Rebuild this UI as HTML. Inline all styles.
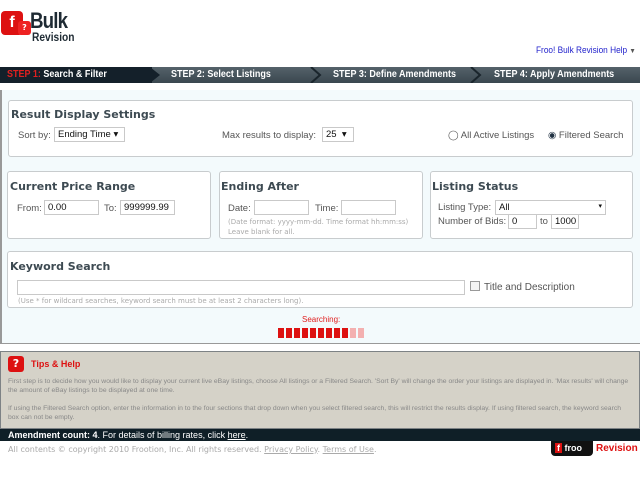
<!DOCTYPE html>
<html><head><meta charset="utf-8"><style>
*{margin:0;padding:0;box-sizing:border-box}
body{width:640px;height:480px;background:#fff;font-family:"DejaVu Sans","Liberation Sans",sans-serif;font-size:9px;color:#555;position:relative;overflow:hidden}
.a{position:absolute}
.box{position:absolute;background:#fff;border:1px solid #c8ccce;border-radius:3px}
.h{position:absolute;font-weight:bold;font-size:11px;color:#3d4a52}
.in{position:absolute;border:1px solid #c9c9c9;background:#fff;height:15px;font-size:9.5px;color:#111;padding:1px 3px;font-family:"Liberation Sans",sans-serif}
.lb{position:absolute;font-size:9.5px;color:#555;font-family:"Liberation Sans",sans-serif;white-space:nowrap}
.step{position:absolute;top:67px;height:16px;color:#fff;font-weight:bold;font-size:10px;font-family:"Liberation Sans",sans-serif;line-height:16px;transform:scaleX(.9);transform-origin:left;white-space:nowrap}
.sm{font-size:7px;color:#aaa}
</style></head><body>
<div class="a" style="left:1px;top:11px;width:22px;height:24px;background:#d11;border-radius:4px;color:#fff;font-weight:bold;font-size:16px;font-family:'Liberation Sans';text-align:center;line-height:24px">f</div>
<div class="a" style="left:18px;top:21px;width:13px;height:14px;background:#e22;border-radius:3px;color:#fff;font-weight:bold;font-size:8px;text-align:center;line-height:14px">?</div>
<div class="a" style="left:30px;top:8px;font-family:'Liberation Sans';font-weight:bold;font-size:22px;color:#1e2a33;letter-spacing:-1px;transform:scaleX(.85);transform-origin:left">Bulk</div>
<div class="a" style="left:32px;top:30px;font-family:'Liberation Sans';font-weight:bold;font-size:12px;color:#1e2a33;transform:scaleX(.85);transform-origin:left">Revision</div>
<div class="a" style="left:536px;top:45px;font-family:'Liberation Sans';font-size:9px;color:#2222cc;white-space:nowrap;transform:scaleX(.92);transform-origin:left">Froo! Bulk Revision Help <span style="color:#555;font-size:7px">▼</span></div>
<div class="a" style="left:0;top:67px;width:640px;height:16px;background:linear-gradient(#55626a,#3a474f)"></div>
<div class="a" style="left:0;top:67px;width:152px;height:16px;background:#14202a"></div>
<svg class="a" style="left:150px;top:67px" width="12" height="16"><polygon points="0,0 10,8 0,16" fill="#14202a"/></svg>
<svg class="a" style="left:310px;top:67px" width="12" height="16"><polyline points="1,0 10,8 1,16" fill="none" stroke="#1a252c" stroke-width="2"/></svg>
<svg class="a" style="left:470px;top:67px" width="12" height="16"><polyline points="1,0 10,8 1,16" fill="none" stroke="#1a252c" stroke-width="2"/></svg>
<div class="step" style="left:7px"><span style="color:#e02020">STEP 1:</span> Search &amp; Filter</div>
<div class="step" style="left:171px">STEP 2: Select Listings</div>
<div class="step" style="left:333px">STEP 3: Define Amendments</div>
<div class="step" style="left:494px">STEP 4: Apply Amendments</div>
<div class="a" style="left:0;top:90px;width:640px;height:254px;background:#f3fafc;border-left:2px solid #999;border-bottom:1px solid #999"></div>
<div class="box" style="left:8px;top:100px;width:625px;height:57px"></div>
<div class="h" style="left:11px;top:108px">Result Display Settings</div>
<div class="lb" style="left:18px;top:130px">Sort by:</div>
<div class="in" style="left:54px;top:127px;width:71px">Ending Time ▾</div>
<div class="lb" style="left:222px;top:130px">Max results to display:</div>
<div class="in" style="left:322px;top:127px;width:32px">25 &nbsp;▾</div>
<div class="lb" style="left:448px;top:130px">◯ All Active Listings</div>
<div class="lb" style="left:548px;top:130px"><span style="color:#234">◉</span> Filtered Search</div>
<div class="box" style="left:7px;top:171px;width:204px;height:68px"></div>
<div class="h" style="left:10px;top:180px">Current Price Range</div>
<div class="lb" style="left:17px;top:203px">From:</div>
<div class="in" style="left:44px;top:200px;width:55px">0.00</div>
<div class="lb" style="left:104px;top:203px">To:</div>
<div class="in" style="left:120px;top:200px;width:55px">999999.99</div>
<div class="box" style="left:219px;top:171px;width:204px;height:68px"></div>
<div class="h" style="left:221px;top:180px">Ending After</div>
<div class="lb" style="left:228px;top:203px">Date:</div>
<div class="in" style="left:254px;top:200px;width:55px"></div>
<div class="lb" style="left:315px;top:203px">Time:</div>
<div class="in" style="left:341px;top:200px;width:55px"></div>
<div class="a sm" style="left:228px;top:217px;line-height:10px">(Date format: yyyy-mm-dd. Time format hh:mm:ss)<br>Leave blank for all.</div>
<div class="box" style="left:430px;top:171px;width:203px;height:68px"></div>
<div class="h" style="left:432px;top:180px">Listing Status</div>
<div class="lb" style="left:438px;top:202px">Listing Type:</div>
<div class="in" style="left:495px;top:200px;width:111px">All<span style="float:right;font-size:7px">▾</span></div>
<div class="lb" style="left:438px;top:216px">Number of Bids:</div>
<div class="in" style="left:508px;top:214px;width:29px">0</div>
<div class="lb" style="left:540px;top:216px">to</div>
<div class="in" style="left:551px;top:214px;width:28px">1000</div>
<div class="box" style="left:7px;top:251px;width:626px;height:57px"></div>
<div class="h" style="left:10px;top:260px">Keyword Search</div>
<div class="in" style="left:17px;top:280px;width:448px"></div>
<div class="a" style="left:470px;top:281px;width:10px;height:10px;border:1px solid #999;background:#f4f4f4"></div>
<div class="lb" style="left:484px;top:282px;font-size:10px">Title and Description</div>
<div class="a sm" style="left:18px;top:297px">(Use * for wildcard searches, keyword search must be at least 2 characters long).</div>
<div class="a" style="left:302px;top:315px;font-size:8px;color:#e02020;font-family:'Liberation Sans'">Searching:</div>
<div class="a" style="left:278px;top:328px;width:90px;height:10px;display:flex;gap:2px">
<i style="width:6px;background:#d11"></i><i style="width:6px;background:#d11"></i><i style="width:6px;background:#d11"></i><i style="width:6px;background:#d11"></i><i style="width:6px;background:#d11"></i><i style="width:6px;background:#d11"></i><i style="width:6px;background:#d11"></i><i style="width:6px;background:#d11"></i><i style="width:6px;background:#d11"></i><i style="width:6px;background:#f3b0b0"></i><i style="width:6px;background:#f3b0b0"></i></div>
<div class="a" style="left:0;top:351px;width:640px;height:78px;background:#d5d2c8;border:1px solid #7d8285"></div>
<div class="a" style="left:8px;top:356px;width:16px;height:16px;background:#d11;border-radius:3px;color:#fff;font-weight:bold;font-size:11px;text-align:center;line-height:16px">?</div>
<div class="a" style="left:31px;top:359px;font-weight:bold;font-size:9px;color:#d11;font-family:'Liberation Sans'">Tips &amp; Help</div>
<div class="a" style="left:8px;top:377px;width:625px;font-size:6.8px;line-height:9px;color:#888;font-family:'Liberation Sans'">First step is to decide how you would like to display your current live eBay listings, choose All listings or a Filtered Search. 'Sort By' will change the order your listings are displayed in. 'Max results' will change the amount of eBay listings to be displayed at one time.<br><br>If using the Filtered Search option, enter the information in to the four sections that drop down when you select filtered search, this will restrict the results display. If using filtered search, the keyword search box can not be empty.</div>
<div class="a" style="left:0;top:429px;width:640px;height:12px;background:#0f1f27;color:#fff;font-size:9px;line-height:12px;padding-left:8px;font-family:'Liberation Sans'"><b>Amendment count: 4</b>. For details of billing rates, click <u>here</u>.</div>
<div class="a" style="left:8px;top:445px;font-size:8px;color:#aaa">All contents © copyright 2010 Frootion, Inc. All rights reserved. <u>Privacy Policy</u>. <u>Terms of Use</u>.</div>
<div class="a" style="left:551px;top:441px;width:42px;height:15px;background:#111;border-radius:0 0 4px 4px;color:#fff;font-weight:bold;font-size:9px;font-family:'Liberation Sans';line-height:15px;padding-left:4px"><span style="background:#d11;padding:0 2px">f</span> froo</div>
<div class="a" style="left:596px;top:443px;font-weight:bold;font-size:10px;color:#d11;font-family:'Liberation Sans'">Revision</div>
</body></html>
